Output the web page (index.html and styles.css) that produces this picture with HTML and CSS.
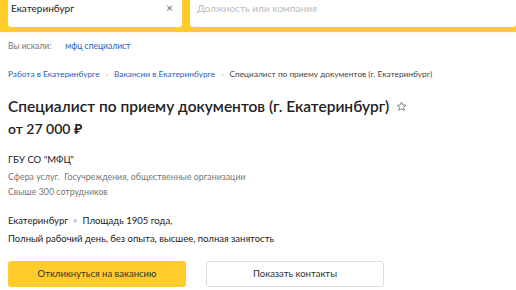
FILE: index.html
```html
<!DOCTYPE html>
<html lang="ru">
<head>
    <meta charset="UTF-8">
    <title>Специалист по приему документов</title>
    <link rel="stylesheet" href="styles.css">
</head>
<body>
    <header class="search-bar">
        <div class="field field-city">
            <span>Екатеринбург</span>
            <span class="clear">×</span>
        </div>
        <div class="field field-query">
            <span class="placeholder">Должность или компания</span>
        </div>
    </header>

    <div class="page">
        <div class="searched">
            <span class="muted">Вы искали:</span>
            <a href="#" class="link">мфц специалист</a>
        </div>

        <nav class="crumbs">
            <a href="#" class="link">Работа в Екатеринбурге</a>
            <span class="sep">›</span>
            <a href="#" class="link">Вакансии в Екатеринбурге</a>
            <span class="sep">›</span>
            <span>Специалист по приему документов (г. Екатеринбург)</span>
        </nav>

        <div class="title-row">
            <h1>Специалист по приему документов (г. Екатеринбург)</h1>
            <svg class="star" width="11" height="11" viewBox="0 0 24 24">
                <path d="M12 2.5l2.9 6.2 6.6.7-5 4.5 1.4 6.6L12 17.2l-5.9 3.3 1.4-6.6-5-4.5 6.6-.7z" fill="none" stroke="#777" stroke-width="2" stroke-linejoin="round"/>
            </svg>
        </div>
        <div class="salary">от 27 000 ₽</div>

        <div class="company">
            <div class="company-name">ГБУ СО "МФЦ"</div>
            <div class="muted">Сфера услуг. &nbsp;Госучреждения, общественные организации</div>
            <div class="muted">Свыше 300 сотрудников</div>
        </div>

        <div class="place">Екатеринбург <span class="dot">•</span> Площадь 1905 года,</div>
        <div class="terms">Полный рабочий день, без опыта, высшее, полная занятость</div>

        <div class="actions">
            <button class="btn btn-primary">Откликнуться на вакансию</button>
            <button class="btn btn-outline">Показать контакты</button>
        </div>
    </div>
</body>
</html>
```

FILE: styles.css
```css
:root {
    --yellow: #ffcc2b;
    --text: #222;
    --muted: #777;
    --link: #2a62b8;
}

body {
    margin: 0;
    font-family: Lato, "Noto Sans", sans-serif;
    color: var(--text);
    background: #fff;
}

.search-bar {
    display: flex;
    gap: 8px;
    padding: 0 0 5px 8px;
    background: var(--yellow);
    box-shadow: 0 2px 3px rgba(255, 204, 43, 0.15);
}

.field {
    height: 27px;
    background: #fff;
    border-radius: 0 0 3px 3px;
    display: flex;
    align-items: flex-start;
    padding: 0 7px;
    font-size: 10px;
    line-height: 16px;
    box-sizing: border-box;
}

.field-city {
    width: 174px;
    padding-left: 3px;
    padding-right: 9px;
    justify-content: space-between;
}

.field-city .clear {
    color: #666;
    font-size: 12px;
    line-height: 15px;
}

.field-query {
    flex: 1;
}

.placeholder {
    color: #bbb;
}

.page {
    padding: 0 8px;
}

.searched {
    margin-top: 8px;
    font-size: 8.5px;
    line-height: 12px;
    display: flex;
    gap: 14px;
}

.muted {
    color: var(--muted);
}

.link {
    color: var(--link);
    text-decoration: none;
}

.crumbs {
    margin-top: 16px;
    font-size: 8.3px;
    line-height: 12px;
    color: #444;
    display: flex;
    gap: 6px;
    white-space: nowrap;
}

.crumbs .sep {
    color: #aaa;
}

.title-row {
    display: flex;
    align-items: center;
    gap: 7px;
    margin-top: 15px;
}

h1 {
    margin: 0;
    font-size: 15.5px;
    font-weight: 600;
    line-height: 22px;
    white-space: nowrap;
}

.salary {
    margin-top: 2px;
    font-size: 14px;
    font-weight: 600;
    line-height: 20px;
}

.company {
    margin-top: 12.5px;
    font-size: 9.5px;
    line-height: 15px;
}

.company-name {
    margin-bottom: 2px;
}

.company .muted {
    font-size: 8.8px;
}

.place {
    margin-top: 14px;
    font-size: 9.5px;
    line-height: 16px;
}

.dot {
    color: #ccc;
    margin: 0 2px;
}

.terms {
    margin-top: 2px;
    font-size: 9.5px;
    line-height: 16px;
}

.actions {
    display: flex;
    gap: 20px;
    margin-top: 14px;
}

.btn {
    width: 178px;
    height: 26px;
    font-family: inherit;
    font-size: 9.5px;
    color: #333;
    border-radius: 3px;
    cursor: pointer;
}

.btn-primary {
    background: var(--yellow);
    border: none;
}

.btn-outline {
    background: #fff;
    border: 1px solid #ddd;
}
```
